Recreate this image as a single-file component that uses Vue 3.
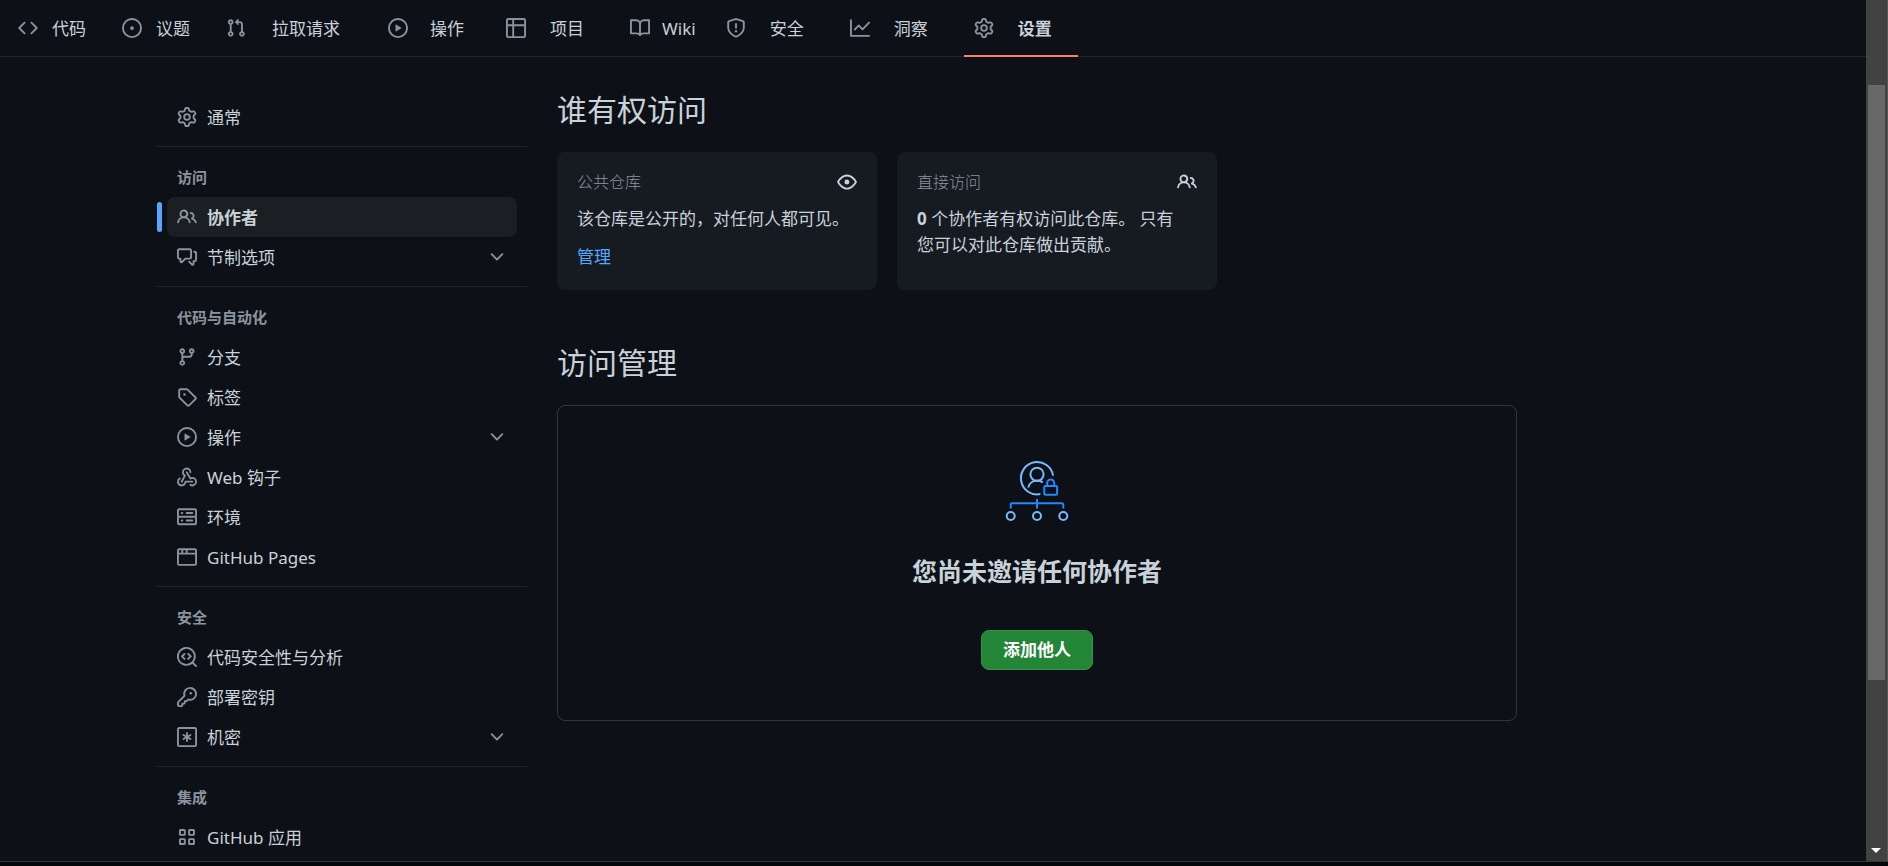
<template>
  <div class="window">
    <div class="viewport">
      <div class="page">
        <nav class="repo-nav" aria-label="仓库">
          <a
            v-for="tab in tabs"
            :key="tab.label"
            href="#"
            class="tab"
            :class="[tab.size, { active: tab.active }]"
          >
            <svg class="icon" viewBox="0 0 16 16" aria-hidden="true">
              <path :d="icons[tab.icon]" />
            </svg>
            <span class="tab-label">{{ tab.label }}</span>
          </a>
        </nav>

        <div class="layout">
          <aside class="sidebar">
            <section v-for="group in groups" :key="group.title" class="group">
              <h3 v-if="group.title" class="group-title">{{ group.title }}</h3>
              <ul class="group-list">
                <li v-for="item in group.items" :key="item.label" class="row" :class="{ active: item.active }">
                  <component
                    :is="item.expandable ? 'button' : 'a'"
                    class="row-link"
                    :href="item.expandable ? undefined : '#'"
                    :type="item.expandable ? 'button' : undefined"
                  >
                    <svg class="icon" viewBox="0 0 16 16" aria-hidden="true">
                      <path :d="icons[item.icon]" />
                    </svg>
                    <span class="row-label">{{ item.label }}</span>
                    <svg v-if="item.expandable" class="icon" viewBox="0 0 16 16" aria-hidden="true">
                      <path :d="icons.chevron" />
                    </svg>
                  </component>
                </li>
              </ul>
            </section>
          </aside>

          <main class="content">
            <h2 class="heading">谁有权访问</h2>
            <div class="cards">
              <div class="card">
                <div class="card-head">
                  <span class="card-label">公共仓库</span>
                  <svg class="icon" viewBox="0 0 16 16" aria-hidden="true">
                    <path :d="icons.eye" />
                  </svg>
                </div>
                <p class="card-text">该仓库是公开的，对任何人都可见。</p>
                <a href="#" class="card-link">管理</a>
              </div>
              <div class="card">
                <div class="card-head">
                  <span class="card-label">直接访问</span>
                  <svg class="icon" viewBox="0 0 16 16" aria-hidden="true">
                    <path :d="icons.people" />
                  </svg>
                </div>
                <p class="card-text"><strong>0</strong> 个协作者有权访问此仓库。 只有<br />您可以对此仓库做出贡献。</p>
              </div>
            </div>

            <h2 class="heading">访问管理</h2>
            <div class="blank">
              <svg class="blank-art" viewBox="0 0 64 62" aria-hidden="true">
                <g class="art-light">
                  <path d="M48.1 15.6A16.2 16.2 0 1 0 35.4 34.1" />
                  <circle cx="32" cy="14.3" r="6.6" />
                  <path d="M23.2 27.6c1-4 4.6-7 8.8-7 2.3 0 4.2.6 5.7 1.8" />
                  <circle cx="5.7" cy="56" r="4" />
                  <circle cx="32" cy="56" r="4" />
                  <circle cx="58.3" cy="56" r="4" />
                </g>
                <g class="art-dark">
                  <rect x="39.3" y="26" width="12.8" height="8.8" rx="1" />
                  <path d="M42.2 26v-3a3.5 3.5 0 0 1 7 0v3" />
                  <path d="M32 39v9.500M5.7 48.500v-3.700q0-1.500 1.500-1.500h49.600q1.500 0 1.500 1.500v3.700" />
                </g>
              </svg>
              <h3 class="blank-title">您尚未邀请任何协作者</h3>
              <button type="button" class="add-btn">添加他人</button>
            </div>
          </main>
        </div>
      </div>

      <div class="scrollbar">
        <div class="thumb"></div>
        <div class="arrow"></div>
      </div>
    </div>
    <div class="bottom-edge"></div>
  </div>
</template>

<script setup>
const tile = (x, y) =>
  `M${x + 1.2} ${y}h3a1.2 1.2 0 0 1 1.2 1.2v3a1.2 1.2 0 0 1-1.2 1.2h-3a1.2 1.2 0 0 1-1.2-1.2v-3a1.2 1.2 0 0 1 1.2-1.2Zm.3 1.5v2.4h2.4v-2.4Z`;

const icons = {
  code: 'm11.28 3.22 4.25 4.25a.75.75 0 0 1 0 1.06l-4.25 4.25a.749.749 0 0 1-1.275-.326.749.749 0 0 1 .215-.734L13.94 8l-3.72-3.72a.749.749 0 0 1 .326-1.275.749.749 0 0 1 .734.215Zm-6.56 0a.751.751 0 0 1 1.042.018.751.751 0 0 1 .018 1.042L2.06 8l3.72 3.72a.749.749 0 0 1-.326 1.275.749.749 0 0 1-.734-.215L.47 8.53a.75.75 0 0 1 0-1.06Z',
  issue: 'M8 9.5a1.5 1.5 0 1 0 0-3 1.5 1.5 0 0 0 0 3ZM8 0a8 8 0 1 1 0 16A8 8 0 0 1 8 0ZM1.5 8a6.5 6.5 0 1 0 13 0 6.5 6.5 0 0 0-13 0Z',
  pull: 'M1.5 3.25a2.25 2.25 0 1 1 3 2.122v5.256a2.251 2.251 0 1 1-1.5 0V5.372A2.25 2.25 0 0 1 1.5 3.25Zm5.677-.177L9.573.677A.25.25 0 0 1 10 .854V2.5h1A2.5 2.5 0 0 1 13.5 5v5.628a2.251 2.251 0 1 1-1.5 0V5a1 1 0 0 0-1-1h-1v1.646a.25.25 0 0 1-.427.177L7.177 3.427a.25.25 0 0 1 0-.354ZM3.75 2.5a.75.75 0 1 0 0 1.5.75.75 0 0 0 0-1.5Zm0 9.5a.75.75 0 1 0 0 1.5.75.75 0 0 0 0-1.5Zm8.25.75a.75.75 0 1 0 1.5 0 .75.75 0 0 0-1.5 0Z',
  play: 'M8 0a8 8 0 1 1 0 16A8 8 0 0 1 8 0ZM1.5 8a6.5 6.5 0 1 0 13 0 6.5 6.5 0 0 0-13 0Zm4.879-2.773 4.264 2.559a.25.25 0 0 1 0 .428l-4.264 2.559A.25.25 0 0 1 6 10.559V5.442a.25.25 0 0 1 .379-.215Z',
  table: 'M0 1.75C0 .784.784 0 1.75 0h12.5C15.216 0 16 .784 16 1.75v12.5A1.75 1.75 0 0 1 14.25 16H1.75A1.75 1.75 0 0 1 0 14.25ZM6.5 6.5v8h7.75a.25.25 0 0 0 .25-.25V6.5Zm8-1.5V1.75a.25.25 0 0 0-.25-.25H6.5V5Zm-13 1.5v7.75c0 .138.112.25.25.25H5v-8ZM5 5V1.5H1.75a.25.25 0 0 0-.25.25V5Z',
  book: 'M0 1.75A.75.75 0 0 1 .75 1h4.253c1.227 0 2.317.59 3 1.501A3.743 3.743 0 0 1 11.006 1h4.245a.75.75 0 0 1 .75.75v10.5a.75.75 0 0 1-.75.75h-4.507a2.25 2.25 0 0 0-1.591.659l-.622.621a.75.75 0 0 1-1.06 0l-.622-.621A2.25 2.25 0 0 0 5.258 13H.75a.75.75 0 0 1-.75-.75Zm7.251 10.324.004-5.073-.002-2.253A2.25 2.25 0 0 0 5.003 2.5H1.5v9h3.757a3.75 3.75 0 0 1 1.994.574ZM8.755 4.75l-.004 7.322a3.752 3.752 0 0 1 1.992-.572H14.5v-9h-3.495a2.25 2.25 0 0 0-2.25 2.25Z',
  shield: 'M7.467.133a1.748 1.748 0 0 1 1.066 0l5.25 1.68A1.75 1.75 0 0 1 15 3.48V7c0 1.566-.32 3.182-1.303 4.682-.983 1.498-2.585 2.813-5.032 3.855a1.697 1.697 0 0 1-1.33 0c-2.447-1.042-4.049-2.357-5.032-3.855C1.32 10.182 1 8.566 1 7V3.48a1.75 1.75 0 0 1 1.217-1.667Zm.61 1.429a.25.25 0 0 0-.153 0l-5.25 1.68a.25.25 0 0 0-.174.238V7c0 1.358.275 2.666 1.057 3.86.784 1.194 2.121 2.34 4.366 3.297a.196.196 0 0 0 .154 0c2.245-.956 3.582-2.104 4.366-3.298C13.225 9.666 13.5 8.36 13.5 7V3.48a.251.251 0 0 0-.174-.237l-5.25-1.68ZM8.75 4.75v3a.75.75 0 0 1-1.5 0v-3a.75.75 0 0 1 1.5 0ZM9 10.5a1 1 0 1 1-2 0 1 1 0 0 1 2 0Z',
  graph: 'M1.5 1.75V13.5h13.75a.75.75 0 0 1 0 1.5H.75a.75.75 0 0 1-.75-.75V1.75a.75.75 0 0 1 1.5 0Zm14.28 2.53-5.25 5.25a.75.75 0 0 1-1.06 0L7 7.06 4.28 9.78a.751.751 0 0 1-1.042-.018.751.751 0 0 1-.018-1.042l3.25-3.25a.75.75 0 0 1 1.06 0L10 7.94l4.72-4.72a.751.751 0 0 1 1.042.018.751.751 0 0 1 .018 1.042Z',
  gear: 'M8 0a8.2 8.2 0 0 1 .701.031C9.444.095 9.99.645 10.16 1.29l.288 1.107c.018.066.079.158.212.224.231.114.454.243.668.386.123.082.233.09.299.071l1.103-.303c.644-.176 1.392.021 1.82.63.27.385.506.792.704 1.218.315.675.111 1.422-.364 1.891l-.814.806c-.049.048-.098.147-.088.294.016.257.016.515 0 .772-.01.147.038.246.088.294l.814.806c.475.469.679 1.216.364 1.891a7.977 7.977 0 0 1-.704 1.217c-.428.61-1.176.807-1.82.63l-1.102-.302c-.067-.019-.177-.011-.3.071a5.909 5.909 0 0 1-.668.386c-.133.066-.194.158-.211.224l-.29 1.106c-.168.646-.715 1.196-1.458 1.26a8.006 8.006 0 0 1-1.402 0c-.743-.064-1.289-.614-1.458-1.26l-.289-1.106c-.018-.066-.079-.158-.212-.224a5.738 5.738 0 0 1-.668-.386c-.123-.082-.233-.09-.299-.071l-1.103.303c-.644.176-1.392-.021-1.82-.63a8.12 8.12 0 0 1-.704-1.218c-.315-.675-.111-1.422.363-1.891l.815-.806c.05-.048.098-.147.088-.294a6.214 6.214 0 0 1 0-.772c.01-.147-.038-.246-.088-.294l-.815-.806C.635 6.045.431 5.298.746 4.623a7.92 7.92 0 0 1 .704-1.217c.428-.61 1.176-.807 1.82-.63l1.102.302c.067.019.177.011.3-.071.214-.143.437-.272.668-.386.133-.066.194-.158.211-.224l.29-1.106C6.009.645 6.556.095 7.299.03 7.53.01 7.764 0 8 0Zm-.571 1.525c-.036.003-.108.036-.137.146l-.289 1.105c-.147.561-.549.967-.998 1.189-.173.086-.34.183-.5.29-.417.278-.97.423-1.529.27l-1.103-.303c-.109-.03-.175.016-.195.045-.22.312-.412.644-.573.99-.014.031-.021.11.059.19l.815.806c.411.406.562.957.53 1.456a4.709 4.709 0 0 0 0 .582c.032.499-.119 1.05-.53 1.456l-.815.806c-.081.08-.073.159-.059.19.162.346.353.677.573.989.02.03.085.076.195.046l1.102-.303c.56-.153 1.113-.008 1.53.27.161.107.328.204.501.29.447.222.85.629.997 1.189l.289 1.105c.029.109.101.143.137.146a6.6 6.6 0 0 0 1.142 0c.036-.003.108-.036.137-.146l.289-1.105c.147-.561.549-.967.998-1.189.173-.086.34-.183.5-.29.417-.278.97-.423 1.529-.27l1.103.303c.109.029.175-.016.195-.045.22-.313.411-.644.573-.99.014-.031.021-.11-.059-.19l-.815-.806c-.411-.406-.562-.957-.53-1.456a4.709 4.709 0 0 0 0-.582c-.032-.499.119-1.05.53-1.456l.815-.806c.081-.08.073-.159.059-.19a6.464 6.464 0 0 0-.573-.989c-.02-.03-.085-.076-.195-.046l-1.102.303c-.56.153-1.113.008-1.53-.27a4.44 4.44 0 0 0-.501-.29c-.447-.222-.85-.629-.997-1.189l-.289-1.105c-.029-.11-.101-.143-.137-.146a6.6 6.6 0 0 0-1.142 0ZM11 8a3 3 0 1 1-6 0 3 3 0 0 1 6 0ZM9.5 8a1.5 1.5 0 1 0-3.001.001A1.5 1.5 0 0 0 9.5 8Z',
  people: 'M2 5.5a3.5 3.5 0 1 1 5.898 2.549 5.508 5.508 0 0 1 3.034 4.084.75.75 0 1 1-1.482.235 4 4 0 0 0-7.9 0 .75.75 0 0 1-1.482-.236A5.507 5.507 0 0 1 3.102 8.05 3.493 3.493 0 0 1 2 5.5ZM11 4a3.001 3.001 0 0 1 2.22 5.018 5.01 5.01 0 0 1 2.56 3.012.749.749 0 0 1-.885.954.752.752 0 0 1-.549-.514 3.507 3.507 0 0 0-2.522-2.372.75.75 0 0 1-.574-.73v-.352a.75.75 0 0 1 .416-.672A1.5 1.5 0 0 0 11 5.5.75.75 0 0 1 11 4Zm-5.5-.5a2 2 0 1 0-.001 3.999A2 2 0 0 0 5.5 3.5Z',
  discussion: 'M1.75 1h8.5c.966 0 1.75.784 1.75 1.75v5.5A1.75 1.75 0 0 1 10.25 10H7.061l-2.574 2.573A1.458 1.458 0 0 1 2 11.543V10h-.25A1.75 1.75 0 0 1 0 8.25v-5.5C0 1.784.784 1 1.75 1ZM1.5 2.75v5.5c0 .138.112.25.25.25h1a.75.75 0 0 1 .75.75v2.19l2.72-2.72a.749.749 0 0 1 .53-.22h3.5a.25.25 0 0 0 .25-.25v-5.5a.25.25 0 0 0-.25-.25h-8.5a.25.25 0 0 0-.25.25Zm13 2a.25.25 0 0 0-.25-.25h-.5a.75.75 0 0 1 0-1.5h.5c.966 0 1.75.784 1.75 1.75v5.5A1.75 1.75 0 0 1 14.25 12H14v1.543a1.458 1.458 0 0 1-2.487 1.03L9.22 12.28a.749.749 0 0 1 .326-1.275.749.749 0 0 1 .734.215l2.22 2.22v-2.19a.75.75 0 0 1 .75-.75h1a.25.25 0 0 0 .25-.25Z',
  branch: 'M9.5 3.25a2.25 2.25 0 1 1 3 2.122V6A2.5 2.5 0 0 1 10 8.5H6a1 1 0 0 0-1 1v1.128a2.251 2.251 0 1 1-1.5 0V5.372a2.25 2.25 0 1 1 1.5 0v1.836A2.493 2.493 0 0 1 6 7h4a1 1 0 0 0 1-1v-.628A2.25 2.25 0 0 1 9.5 3.25Zm-6 0a.75.75 0 1 0 1.5 0 .75.75 0 0 0-1.5 0Zm8.25-.75a.75.75 0 1 0 0 1.5.75.75 0 0 0 0-1.5ZM4.25 12a.75.75 0 1 0 0 1.5.75.75 0 0 0 0-1.5Z',
  tag: 'M1 7.775V2.75C1 1.784 1.784 1 2.75 1h5.025c.464 0 .91.184 1.238.513l6.25 6.25a1.75 1.75 0 0 1 0 2.474l-5.026 5.026a1.75 1.75 0 0 1-2.474 0l-6.25-6.25A1.752 1.752 0 0 1 1 7.775Zm1.5 0c0 .066.026.13.073.177l6.25 6.25a.25.25 0 0 0 .354 0l5.025-5.025a.25.25 0 0 0 0-.354l-6.25-6.25a.25.25 0 0 0-.177-.073H2.75a.25.25 0 0 0-.25.25ZM6 5a1 1 0 1 1 0 2 1 1 0 0 1 0-2Z',
  webhook: 'M5.5 4.25a2.25 2.25 0 0 1 4.5 0 .75.75 0 0 0 1.5 0 3.75 3.75 0 1 0-6.14 2.889l-2.272 4.258a.75.75 0 0 0 1.324.706L7 7.25a.75.75 0 0 0-.309-1.015A2.25 2.25 0 0 1 5.5 4.25ZM7.364 3.607a.75.75 0 0 1 1.03.257l2.608 4.349a3.75 3.75 0 1 1-.628 6.785.75.75 0 0 1 .752-1.299 2.25 2.25 0 1 0-.033-3.88.75.75 0 0 1-1.03-.256L7.107 4.636a.75.75 0 0 1 .257-1.03ZM2.9 8.776A.75.75 0 0 1 2.625 9.8 2.25 2.25 0 1 0 6 11.75a.75.75 0 0 1 .75-.751h5.5a.75.75 0 0 1 0 1.5H7.425a3.751 3.751 0 1 1-5.55-3.998.75.75 0 0 1 1.024.274Z',
  server: 'M1.75 1h12.5c.966 0 1.75.784 1.75 1.75v4c0 .372-.116.717-.314 1 .198.283.314.628.314 1v4a1.75 1.75 0 0 1-1.75 1.75H1.75A1.75 1.75 0 0 1 0 12.75v-4c0-.358.109-.707.314-1a1.739 1.739 0 0 1-.314-1v-4C0 1.784.784 1 1.75 1ZM1.5 2.75v4c0 .138.112.25.25.25h12.5a.25.25 0 0 0 .25-.25v-4a.25.25 0 0 0-.25-.25H1.75a.25.25 0 0 0-.25.25Zm.25 5.75a.25.25 0 0 0-.25.25v4c0 .138.112.25.25.25h12.5a.25.25 0 0 0 .25-.25v-4a.25.25 0 0 0-.25-.25ZM7 4.75A.75.75 0 0 1 7.75 4h4.5a.75.75 0 0 1 0 1.5h-4.5A.75.75 0 0 1 7 4.75ZM7.75 10h4.5a.75.75 0 0 1 0 1.5h-4.5a.75.75 0 0 1 0-1.5ZM3 4.75A.75.75 0 0 1 3.75 4h.5a.75.75 0 0 1 0 1.5h-.5A.75.75 0 0 1 3 4.75ZM3.75 10h.5a.75.75 0 0 1 0 1.5h-.5a.75.75 0 0 1 0-1.5Z',
  browser: 'M0 2.75C0 1.784.784 1 1.75 1h12.5c.966 0 1.75.784 1.75 1.75v10.5A1.75 1.75 0 0 1 14.25 15H1.75A1.75 1.75 0 0 1 0 13.25ZM14.5 6h-13v7.25c0 .138.112.25.25.25h12.5a.25.25 0 0 0 .25-.25Zm-6-3.5v2h6V2.75a.25.25 0 0 0-.25-.25ZM5 2.5v2h2v-2Zm-3.25 0a.25.25 0 0 0-.25.25V4.5h2v-2Z',
  codescan: 'M8.47 4.97a.75.75 0 0 0 0 1.06L9.94 7.5 8.47 8.97a.75.75 0 1 0 1.06 1.06l2-2a.75.75 0 0 0 0-1.06l-2-2a.75.75 0 0 0-1.06 0ZM6.53 6.03a.75.75 0 0 0-1.06-1.06l-2 2a.75.75 0 0 0 0 1.06l2 2a.75.75 0 1 0 1.06-1.06L5.06 7.5ZM12.246 13.307a7.501 7.501 0 1 1 1.06-1.06l2.474 2.473a.749.749 0 1 1-1.06 1.06ZM1.5 7.5a6.002 6.002 0 0 0 3.608 5.504 6.002 6.002 0 0 0 6.486-1.117.748.748 0 0 1 .292-.293A6 6 0 1 0 1.5 7.5Z',
  key: 'M10.5 0a5.499 5.499 0 1 1-1.288 10.848l-.932.932a.749.749 0 0 1-.53.22H7v.75a.749.749 0 0 1-.22.53l-.5.5a.749.749 0 0 1-.53.22H5v.75a.749.749 0 0 1-.22.53l-.5.5a.749.749 0 0 1-.53.22h-2A1.75 1.75 0 0 1 0 14.25v-2c0-.199.079-.389.22-.53l4.932-4.932A5.5 5.5 0 0 1 10.5 0Zm-4 5.5c-.001.431.069.86.205 1.269a.75.75 0 0 1-.181.768L1.5 12.56v1.69c0 .138.112.25.25.25h1.69l.06-.06v-1.19a.75.75 0 0 1 .75-.75h1.19l.06-.06v-1.19a.75.75 0 0 1 .75-.75h1.19l1.023-1.025a.75.75 0 0 1 .768-.18A4 4 0 1 0 6.5 5.5ZM11 6a1 1 0 1 1 0-2 1 1 0 0 1 0 2Z',
  secret: 'M1.75 0h12.5A1.75 1.75 0 0 1 16 1.75v12.5A1.75 1.75 0 0 1 14.25 16H1.75A1.75 1.75 0 0 1 0 14.25V1.75C0 .784.784 0 1.75 0ZM1.5 1.75v12.5c0 .138.112.25.25.25h12.5a.25.25 0 0 0 .25-.25V1.75a.25.25 0 0 0-.25-.25H1.75a.25.25 0 0 0-.25.25ZM8 4a.75.75 0 0 1 .75.75V6.7l1.69-.975a.75.75 0 0 1 .75 1.3L9.5 8l1.69.976a.75.75 0 0 1-.75 1.298L8.75 9.3v1.951a.75.75 0 0 1-1.5 0V9.299l-1.69.976a.75.75 0 0 1-.75-1.3L6.5 8l-1.69-.975a.75.75 0 0 1 .75-1.3l1.69.976V4.75A.75.75 0 0 1 8 4Z',
  apps: tile(1.6, 1.6) + tile(8.9, 1.6) + tile(1.6, 8.9) + tile(8.9, 8.9),
  eye: 'M8 2c1.981 0 3.671.992 4.933 2.078 1.27 1.091 2.187 2.345 2.637 3.023a1.62 1.62 0 0 1 0 1.798c-.45.678-1.367 1.932-2.637 3.023C11.67 13.008 9.981 14 8 14c-1.981 0-3.671-.992-4.933-2.078C1.797 10.83.88 9.576.43 8.898a1.62 1.62 0 0 1 0-1.798c.45-.677 1.367-1.931 2.637-3.022C4.33 2.992 6.019 2 8 2ZM1.679 7.932a.12.12 0 0 0 0 .136c.411.622 1.241 1.75 2.366 2.717C5.176 11.758 6.527 12.5 8 12.5c1.473 0 2.825-.742 3.955-1.715 1.124-.967 1.954-2.096 2.366-2.717a.12.12 0 0 0 0-.136c-.412-.621-1.242-1.75-2.366-2.717C10.824 4.242 9.473 3.5 8 3.5c-1.473 0-2.825.742-3.955 1.715-1.124.967-1.954 2.096-2.366 2.717ZM8 10a2 2 0 1 1-.001-3.999A2 2 0 0 1 8 10Z',
  chevron: 'M12.78 5.22a.749.749 0 0 1 0 1.06l-4.25 4.25a.749.749 0 0 1-1.06 0L3.22 6.28a.749.749 0 1 1 1.06-1.06L8 8.939l3.72-3.719a.749.749 0 0 1 1.06 0Z'
};

const tabs = [
  { label: '代码', icon: 'code', size: 'small' },
  { label: '议题', icon: 'issue', size: 'small' },
  { label: '拉取请求', icon: 'pull', size: 'large' },
  { label: '操作', icon: 'play', size: 'medium' },
  { label: '项目', icon: 'table' },
  { label: 'Wiki', icon: 'book', size: 'compact' },
  { label: '安全', icon: 'shield' },
  { label: '洞察', icon: 'graph' },
  { label: '设置', icon: 'gear', active: true }
];

const groups = [
  {
    title: '',
    items: [{ label: '通常', icon: 'gear' }]
  },
  {
    title: '访问',
    items: [
      { label: '协作者', icon: 'people', active: true },
      { label: '节制选项', icon: 'discussion', expandable: true }
    ]
  },
  {
    title: '代码与自动化',
    items: [
      { label: '分支', icon: 'branch' },
      { label: '标签', icon: 'tag' },
      { label: '操作', icon: 'play', expandable: true },
      { label: 'Web 钩子', icon: 'webhook' },
      { label: '环境', icon: 'server' },
      { label: 'GitHub Pages', icon: 'browser' }
    ]
  },
  {
    title: '安全',
    items: [
      { label: '代码安全性与分析', icon: 'codescan' },
      { label: '部署密钥', icon: 'key' },
      { label: '机密', icon: 'secret', expandable: true }
    ]
  },
  {
    title: '集成',
    items: [{ label: 'GitHub 应用', icon: 'apps' }]
  }
];
</script>

<style>
body {
  margin: 0;
  background: #0d1117;
}
</style>

<style scoped>
* {
  box-sizing: border-box;
}

.window {
  display: flex;
  flex-direction: column;
  height: 100vh;
  overflow: hidden;
  background: #0d1117;
  color: #c9d1d9;
  font-family: "Noto Sans", "Noto Sans CJK SC", sans-serif;
  font-size: 17px;
  line-height: 26px;
}

.viewport {
  display: flex;
  flex: 1;
  min-height: 0;
}

.page {
  flex: 1;
  min-width: 0;
  overflow: hidden;
}

.icon {
  flex: none;
  width: 20px;
  height: 20px;
  fill: currentColor;
}

.repo-nav {
  display: flex;
  gap: 10px;
  height: 57px;
  padding: 0 8px;
  border-bottom: 1px solid #21262d;
}

.tab {
  display: flex;
  align-items: center;
  gap: 24px;
  height: 57px;
  padding: 0 26px 0 10px;
  border-bottom: 2px solid transparent;
  color: #c9d1d9;
  text-decoration: none;
  white-space: nowrap;
}

.tab.compact {
  gap: 12px;
  padding-right: 10px;
}

.tab.small {
  gap: 14px;
  padding-right: 16px;
}

.tab.medium {
  gap: 22px;
  padding-right: 22px;
}

.tab.large {
  gap: 26px;
  padding-right: 28px;
}

.tab.active {
  border-bottom-color: #f78166;
  font-weight: 600;
}

.tab .icon {
  color: #8b949e;
}

.tab-label,
.row-label {
  padding-top: 2px;
}

.layout {
  display: flex;
  gap: 30px;
  max-width: 1600px;
  margin: 0 auto;
  padding: 40px 24px 0;
}

.sidebar {
  flex: none;
  width: 370px;
}

.group {
  padding-bottom: 9px;
}

.group + .group {
  border-top: 1px solid #21262d;
}

.group-title {
  margin: 0;
  padding: 20px 20px 10px;
  color: #8b949e;
  font-size: 15px;
  line-height: 20px;
  font-weight: 600;
}

.group-list {
  margin: 0;
  padding: 0 10px;
  list-style: none;
}

.row {
  position: relative;
}

.row-link {
  display: flex;
  align-items: center;
  gap: 10px;
  width: 100%;
  height: 40px;
  padding: 0 10px;
  border: none;
  border-radius: 8px;
  background: none;
  color: #c9d1d9;
  font: inherit;
  text-align: left;
  text-decoration: none;
  cursor: pointer;
}

.row-link .icon {
  color: #8b949e;
}

.row-label {
  flex: 1;
}

.row.active .row-link {
  background: #1b1f23;
  font-weight: 600;
}

.row.active::before {
  content: "";
  position: absolute;
  top: 5px;
  left: -10px;
  width: 5px;
  height: 30px;
  border-radius: 8px;
  background: #58a6ff;
}

.content {
  flex: 1;
  min-width: 0;
  max-width: 960px;
}

.heading {
  margin: 0 0 19px;
  font-size: 30px;
  line-height: 46px;
  font-weight: 400;
}

.content .heading:first-child {
  margin-top: -10px;
}

.cards {
  display: grid;
  grid-template-columns: repeat(2, calc(100% / 3));
  gap: 20px;
  margin-bottom: 50px;
}

.card {
  padding: 20px;
  border-radius: 8px;
  background: #161b22;
}

.card-head {
  display: flex;
  align-items: center;
  justify-content: space-between;
  height: 20px;
  margin-bottom: 14px;
}

.card-label {
  color: #8b949e;
  font-size: 16px;
  line-height: 20px;
  font-weight: 300;
}

.card-text {
  margin: 0 0 12px;
}

.card-link {
  display: block;
  color: #58a6ff;
  text-decoration: none;
}

.blank {
  display: flex;
  flex-direction: column;
  align-items: center;
  padding: 54px 40px 50px;
  border: 1px solid #30363d;
  border-radius: 8px;
}

.blank-art {
  width: 64px;
  height: 62px;
  fill: none;
  stroke-width: 2;
}

.art-light {
  stroke: #79b8ff;
}

.art-dark {
  stroke: #2188ff;
}

.blank-title {
  margin: 30px 0 40px;
  font-size: 25px;
  line-height: 38px;
  font-weight: 600;
}

.add-btn {
  height: 40px;
  padding: 0 21px;
  border: 1px solid #37914a;
  border-radius: 8px;
  background: #238636;
  color: #fff;
  font: inherit;
  font-weight: 600;
  cursor: pointer;
}

.scrollbar {
  display: flex;
  flex: none;
  flex-direction: column;
  align-items: center;
  justify-content: space-between;
  width: 22px;
  padding: 85px 1px 8px 0;
  border-right: 1px solid #585858;
  background: #424242;
}

.thumb {
  width: 17px;
  height: 77.5%;
  background: #686868;
}

.arrow {
  border: 5px solid transparent;
  border-top-color: #fff;
  border-bottom: none;
}

.bottom-edge {
  flex: none;
  height: 5px;
  border-top: 1px solid #33373b;
  background: #050607;
}
</style>
